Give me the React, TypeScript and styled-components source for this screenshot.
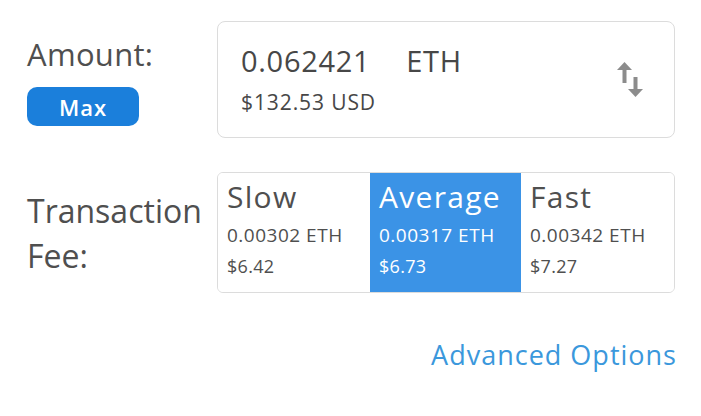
import React from 'react';
import styled, { createGlobalStyle } from 'styled-components';

const GlobalStyle = createGlobalStyle`
  html, body {
    margin: 0;
    padding: 0;
    background: #ffffff;
  }
  body {
    font-family: "Open Sans", Lato, sans-serif;
  }
`;

const Page = styled.div`
  width: 701px;
  height: 416px;
  box-sizing: border-box;
  padding: 21px 26px 0 27px;
  display: grid;
  grid-template-columns: 190px 458px;
  grid-template-rows: 117px 121px auto;
  row-gap: 34px;
  color: #4f4f4f;
`;

const Label = styled.div`
  display: flex;
  flex-direction: column;
  align-items: flex-start;
  font-size: ${p => p.$size || 31}px;
  line-height: ${p => p.$lh || 40}px;
  padding-top: ${p => p.$top || 0}px;
  letter-spacing: ${p => p.$ls ?? 0.3}px;
`;

const MaxButton = styled.button`
  margin-top: 13px;
  width: 112px;
  height: 39px;
  border: none;
  border-radius: 10px;
  background: #1b7fdb;
  color: #fff;
  font-family: inherit;
  font-size: 22px;
  font-weight: 600;
  letter-spacing: 1px;
  padding: 0;
`;

const AmountBox = styled.div`
  border: 1px solid #dcdcdc;
  border-radius: 8px;
  display: flex;
  align-items: flex-start;
  justify-content: space-between;
  padding: 21px 30px 0 23px;
`;

const AmountText = styled.div`
  display: flex;
  flex-direction: column;
`;

const EthLine = styled.div`
  font-size: 29px;
  line-height: 36px;
  letter-spacing: 0.7px;
  color: #474747;
  display: flex;
  gap: 36px;
`;

const UsdLine = styled.div`
  font-size: 21px;
  line-height: 28px;
  letter-spacing: 0.9px;
  margin-top: 9px;
  color: #474747;
`;

const IconWrap = styled.div`
  margin-top: 19px;
  display: flex;
`;

const FeeBox = styled.div`
  border: 1px solid #dcdcdc;
  border-radius: 6px;
  display: grid;
  grid-template-columns: 152px 151px 1fr;
  overflow: hidden;
`;

const FeeCell = styled.div`
  padding: 6px 9px 0;
  background: ${p => (p.$active ? '#3b93e6' : '#ffffff')};
  color: ${p => (p.$active ? '#ffffff' : '#4f4f4f')};
`;

const FeeName = styled.div`
  font-size: 30px;
  line-height: 36px;
  letter-spacing: 1.3px;
`;

const FeeEth = styled.div`
  font-size: 19px;
  line-height: 26px;
  letter-spacing: 0.5px;
  margin-top: 7px;
`;

const FeeUsd = styled.div`
  font-size: 18px;
  line-height: 24px;
  letter-spacing: 0.3px;
  margin-top: 6px;
`;

const Advanced = styled.a`
  grid-column: 2;
  justify-self: end;
  margin-top: 10px;
  font-size: 27px;
  line-height: 36px;
  letter-spacing: 1px;
  color: #3b98dc;
  text-decoration: none;
  margin-right: -2px;
`;

const SwapIcon = () => (
  <svg width="27" height="36" viewBox="0 0 27 36" fill="#8c8c8c">
    <path d="M7.5 0 L15 8 H9.5 V21 H5.5 V8 H0 Z" />
    <path d="M18.5 35 L26 27 H20.5 V15 H16.5 V27 H11 Z" />
  </svg>
);

const fees = [
  { name: 'Slow', eth: '0.00302 ETH', usd: '$6.42' },
  { name: 'Average', eth: '0.00317 ETH', usd: '$6.73', active: true },
  { name: 'Fast', eth: '0.00342 ETH', usd: '$7.27' },
];

const App = () => {
  return (
    <>
      <GlobalStyle />
      <Page>
        <Label $top={13}>
          Amount:
          <MaxButton>Max</MaxButton>
        </Label>
        <AmountBox>
          <AmountText>
            <EthLine>
              <span>0.062421</span>
              <span>ETH</span>
            </EthLine>
            <UsdLine>$132.53 USD</UsdLine>
          </AmountText>
          <IconWrap>
            <SwapIcon />
          </IconWrap>
        </AmountBox>
        <Label $top={16} $size={32} $lh={45} $ls={0}>
          <span>Transaction</span>
          <span>Fee:</span>
        </Label>
        <FeeBox>
          {fees.map(f => (
            <FeeCell key={f.name} $active={f.active}>
              <FeeName>{f.name}</FeeName>
              <FeeEth>{f.eth}</FeeEth>
              <FeeUsd>{f.usd}</FeeUsd>
            </FeeCell>
          ))}
        </FeeBox>
        <Advanced href="#">Advanced Options</Advanced>
      </Page>
    </>
  );
};

export default App;
